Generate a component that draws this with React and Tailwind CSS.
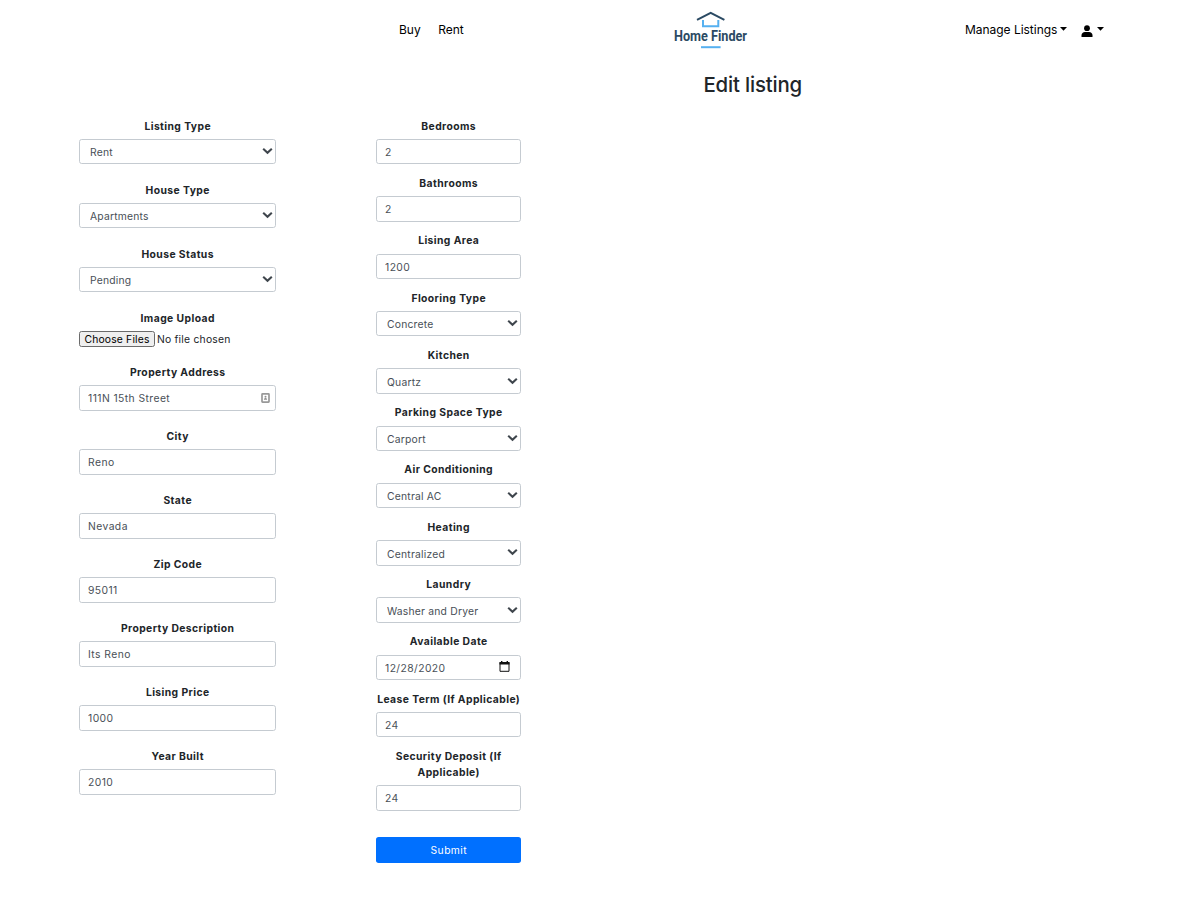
const SANS = "font-['Inter','Liberation_Sans',sans-serif]";
const BOX =
  "block h-[25.33px] w-full appearance-none rounded-[2.67px] border border-[#c5cbd1] bg-white text-[10.35px] leading-[16px] text-[#495057] outline-none";

function Field({ label, gap, children }) {
  return (
    <div className={`flex flex-col ${gap}`}>
      <label className="mb-[4.6px] pl-[0.4px] text-center text-[10.35px] leading-[15.8px] font-bold tracking-[0.41px] text-[#212529]">
        {label}
      </label>
      {children}
    </div>
  );
}

function Chevron() {
  return (
    <svg className="pointer-events-none absolute top-[8.3px] right-[3.4px]" width="11" height="8" viewBox="0 0 11 8" fill="none">
      <path d="M1.2 1.7 5.5 5.7 9.8 1.7" stroke="#3f464d" strokeWidth="2.1" />
    </svg>
  );
}

function Text({ label, value, gap, icon }) {
  return (
    <Field label={label} gap={gap}>
      <div className="relative">
        <input className={`${BOX} px-[8px] pt-[1px] tracking-[0.42px]`} defaultValue={value} />
        {icon}
      </div>
    </Field>
  );
}

function Select({ label, value, gap }) {
  return (
    <Field label={label} gap={gap}>
      <div className="relative">
        <select className={`${BOX} px-[10px] pt-[1.6px] tracking-[0.2px]`} defaultValue={value}>
          <option>{value}</option>
        </select>
        <Chevron />
      </div>
    </Field>
  );
}

function ContactIcon() {
  return (
    <svg className="absolute top-[8px] right-[6px]" width="9" height="10" viewBox="0 0 9 10" fill="none">
      <rect x="1" y="0.9" width="7" height="8.2" rx="0.5" stroke="#999" strokeWidth="1.7" />
      <circle cx="4.5" cy="3.7" r="1" fill="#909090" />
      <path d="M2.9 6.8c0-2.4 3.2-2.4 3.2 0z" fill="#909090" />
    </svg>
  );
}

function CalendarIcon() {
  return (
    <svg className="absolute top-[6px] right-[11.5px]" width="11" height="11" viewBox="0 0 11 11" fill="none">
      <path d="M1 1.5h9v8.8H1z" stroke="#111" />
      <path d="M.5 1h10v2.4H.5zM2 0h1.4v1.5H2zM7.6 0H9v1.5H7.6z" fill="#111" />
    </svg>
  );
}

function Caret() {
  return (
    <svg className="mb-[2.5px]" width="7" height="4" viewBox="0 0 7 4">
      <path d="M0 0h7L3.5 3.8z" fill="#000" />
    </svg>
  );
}

function Logo() {
  return (
    <svg className="overflow-visible" width="82" height="44" viewBox="0 0 82 44" fill="none">
      <path d="M27 11.8 40.7 4.8 54.4 11.8" stroke="#2b4a63" strokeWidth="2" />
      <path d="M33 12v6.2h15.3V12" stroke="#55b0f0" strokeWidth="2" />
      <text x="4" y="33" textLength="73" lengthAdjust="spacingAndGlyphs" fontFamily="Roboto, sans-serif" fontWeight="700" fontSize="14.6" fill="#2b4a63">
        Home Finder
      </text>
      <path d="M31 39.2h19.6" stroke="#55b0f0" strokeWidth="2" />
    </svg>
  );
}

const L = "mb-[18.27px]";
const R = "mb-[11.6px]";

export default function App() {
  return (
    <div className={`h-[898px] w-[1178px] overflow-hidden bg-white ${SANS}`}>
      <nav className="flex h-[60px] items-center text-[12px] leading-[18px] text-black">
        <div className="ml-[399px] flex w-[271px] gap-[17.5px]">
          <a>Buy</a>
          <a>Rent</a>
        </div>
        <Logo />
        <div className="ml-[213px] flex items-center">
          <a className="flex items-center gap-[2.5px] tracking-[-0.03px]">
            Manage Listings
            <Caret />
          </a>
          <a className="ml-[14px] flex items-center gap-[4px]">
            <svg className="mt-[2px]" width="12" height="12" viewBox="0 0 12 12">
              <circle cx="6" cy="3.2" r="2.9" fill="#000" />
              <path d="M.5 12v-1.6C.5 8.2 2 6.9 4 6.9h4c2 0 3.5 1.3 3.5 3.5V12z" fill="#000" />
            </svg>
            <Caret />
          </a>
        </div>
      </nav>
      <h1 className="ml-[703.5px] h-[58.6px] pt-[11px] text-[20.4px] leading-[28px] font-medium tracking-[-0.18px] text-[#212529]">
        Edit listing
      </h1>
      <form className="ml-[79px] flex gap-[100px]">
        <div className="w-[197px]">
          <Select label="Listing Type" value="Rent" gap={L} />
          <Select label="House Type" value="Apartments" gap={L} />
          <Select label="House Status" value="Pending" gap={L} />
          <Field label="Image Upload" gap={L}>
            <div className="flex h-[15.73px] items-center gap-[2px] text-[10.35px] leading-[14px] tracking-[0.22px] text-[#212529]">
              <span className="flex h-[16px] w-[76px] items-center justify-center rounded-[2.5px] border border-[#6b6b6b] bg-[#efefef] pt-[1px] tracking-[0.17px] text-black">
                Choose Files
              </span>
              <span className="pt-[1px]">No file chosen</span>
            </div>
          </Field>
          <Text label="Property Address" value="111N 15th Street" gap={L} icon={<ContactIcon />} />
          <Text label="City" value="Reno" gap={L} />
          <Text label="State" value="Nevada" gap={L} />
          <Text label="Zip Code" value="95011" gap={L} />
          <Text label="Property Description" value="Its Reno" gap={L} />
          <Text label="Lising Price" value="1000" gap={L} />
          <Text label="Year Built" value="2010" gap={L} />
        </div>
        <div className="w-[145px]">
          <Text label="Bedrooms" value="2" gap={R} />
          <Text label="Bathrooms" value="2" gap={R} />
          <Text label="Lising Area" value="1200" gap={R} />
          <Select label="Flooring Type" value="Concrete" gap={R} />
          <Select label="Kitchen" value="Quartz" gap={R} />
          <Select label="Parking Space Type" value="Carport" gap={R} />
          <Select label="Air Conditioning" value="Central AC" gap={R} />
          <Select label="Heating" value="Centralized" gap={R} />
          <Select label="Laundry" value="Washer and Dryer" gap={R} />
          <Text label="Available Date" value="12/28/2020" gap={R} icon={<CalendarIcon />} />
          <Text label="Lease Term (If Applicable)" value="24" gap={R} />
          <Text label="Security Deposit (If Applicable)" value="24" gap="mb-[26.4px]" />
          <button type="button" className="block h-[26px] w-full rounded-[2.67px] bg-[#0070ff] pl-[0.6px] text-[10.35px] leading-[16px] tracking-[0.4px] text-white">
            Submit
          </button>
        </div>
      </form>
    </div>
  );
}
